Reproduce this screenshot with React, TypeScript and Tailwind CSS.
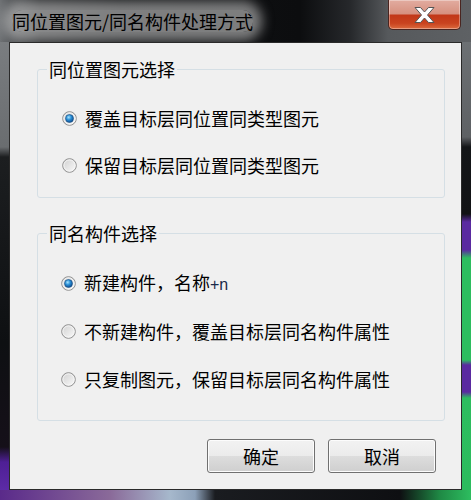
import React from "react";

const Radio = ({ checked }: { checked?: boolean }) => (
  <svg width="15" height="15" viewBox="0 0 15 15" className="shrink-0">
    <defs>
      <linearGradient id="rb-face" x1="0" y1="0" x2="1" y2="1">
        <stop offset="0" stopColor="#cfcfcf" />
        <stop offset="1" stopColor="#fbfbfb" />
      </linearGradient>
      <radialGradient id="rb-dot" cx="0.4" cy="0.35" r="0.7">
        <stop offset="0" stopColor="#a6e4ff" />
        <stop offset="0.45" stopColor="#2b8fd6" />
        <stop offset="1" stopColor="#0a468a" />
      </radialGradient>
    </defs>
    <circle cx="7.5" cy="7.5" r="6.8" fill="url(#rb-face)" stroke="#8c8c8c" />
    <circle cx="7.5" cy="7.5" r="5.6" fill="none" stroke="#f6f6f6" strokeWidth="0.9" />
    {checked && (
      <circle cx="7.5" cy="7.5" r="4" fill="url(#rb-dot)" stroke="#1b4f82" strokeWidth="0.6" />
    )}
  </svg>
);

const Option = ({ label, checked }: { label: React.ReactNode; checked?: boolean }) => (
  <label className="flex items-center gap-[8px] h-[20px] text-[18px] leading-[20px] text-black">
    <Radio checked={checked} />
    <span>{label}</span>
  </label>
);

const Group = ({ title, className, children }: { title: string; className: string; children: React.ReactNode }) => (
  <fieldset className={"ml-[27px] w-[408px] border border-[#d5dfe5] rounded-[3px] " + className}>
    <legend className="ml-[9px] px-[2px] text-[18px] leading-[20px] text-black">{title}</legend>
    {children}
  </fieldset>
);

const Btn = ({ text }: { text: string }) => (
  <button className="w-[108px] h-[34px] rounded-[3px] border border-[#707070] shadow-[inset_0_0_0_1px_#fcfcfc] bg-[linear-gradient(to_bottom,#f2f2f2_0%,#ebebeb_50%,#dddddd_50%,#cfcfcf_100%)] text-[18px] leading-[20px] text-black">
    {text}
  </button>
);

export default function App() {
  return (
    <div className="w-[471px] h-[500px] flex flex-col overflow-hidden bg-[#121416] font-['Noto_Sans_CJK_SC',sans-serif]">
      {/* title bar */}
      <div className="h-[42px] flex bg-[linear-gradient(to_right,#6e7174_0px,#54575a_9px,#26282a_40px,#101214_120px,#0c0d0f_300px,#26282b_350px,#56595c_388px,#5e6164_471px)]">
        <div className="pl-[12px] pt-[10px]">
          <span className="inline-block h-[22px] leading-[22px] text-[18px] text-black rounded-[10px] bg-[rgba(200,200,200,0.6)] shadow-[0_0_12px_9px_rgba(200,200,200,0.6)]">
            同位置图元/同名构件处理方式
          </span>
        </div>
        <div className="ml-auto mr-[10px] w-[73px] h-[30px] flex items-center justify-center rounded-b-[5px] border border-t-0 border-[#4a2520] shadow-[inset_0_0_0_1px_rgba(255,255,255,0.35)] bg-[linear-gradient(to_bottom,#e2aca0_0%,#d6907f_48%,#c23718_52%,#c9431f_80%,#dc6a3e_100%)]">
          <svg width="21" height="16" viewBox="0 0 21 16">
            <polygon
              points="1,0.5 6.5,0.5 10.5,5 14.5,0.5 20,0.5 13.5,8 20,15.5 14.5,15.5 10.5,11 6.5,15.5 1,15.5 7.5,8"
              fill="#ffffff"
              stroke="#555"
              strokeWidth="1"
              strokeLinejoin="round"
            />
          </svg>
        </div>
      </div>

      {/* body row */}
      <div className="flex h-[448px]">
        <div className="w-[9px] bg-[linear-gradient(to_bottom,#7a7d80_0px,#6a6d70_105px,#1c1e20_115px,#0e1012_300px,#151019_405px,#4e1f95_420px,#5c2ba6_448px)]" />
        <div className="w-[453px] border border-[#2a2a2a] bg-[#f0f0f0] flex flex-col">
          <Group title="同位置图元选择" className="mt-[16px] h-[139px]">
            <div className="pl-[24px] pt-[29px] flex flex-col gap-[27px]">
              <Option checked label="覆盖目标层同位置同类型图元" />
              <Option label="保留目标层同位置同类型图元" />
            </div>
          </Group>
          <Group title="同名构件选择" className="mt-[25px] h-[198px]">
            <div className="pl-[23px] pt-[30px] flex flex-col gap-[28px]">
              <Option
                checked
                label={
                  <>
                    新建构件，名称<span className="text-[16px] font-['Liberation_Sans',sans-serif] text-[#1a2a4a]">+n</span>
                  </>
                }
              />
              <Option label="不新建构件，覆盖目标层同名构件属性" />
              <Option label="只复制图元，保留目标层同名构件属性" />
            </div>
          </Group>
          <div className="mt-[18px] mr-[25px] flex justify-end gap-[13px]">
            <Btn text="确定" />
            <Btn text="取消" />
          </div>
        </div>
        <div className="w-[9px] bg-[linear-gradient(to_bottom,#6c7073_0px,#5e6164_95px,#141618_105px,#121315_172px,#5a2aa0_180px,#5a2aa0_208px,#2dbd5f_216px,#2dbd5f_318px,#5a2aa0_323px,#5a2aa0_350px,#2dbd5f_356px,#2cbc5e_448px)]" />
      </div>

      {/* bottom frame */}
      <div className="h-[10px] bg-[linear-gradient(to_right,#5a2a8a_0px,#8a6a99_110px,#a6b8cc_170px,#8ca0b8_195px,#1a1c20_215px,#0e0f12_400px,#1f8a45_440px,#2dbd5f_471px)]" />
    </div>
  );
}
